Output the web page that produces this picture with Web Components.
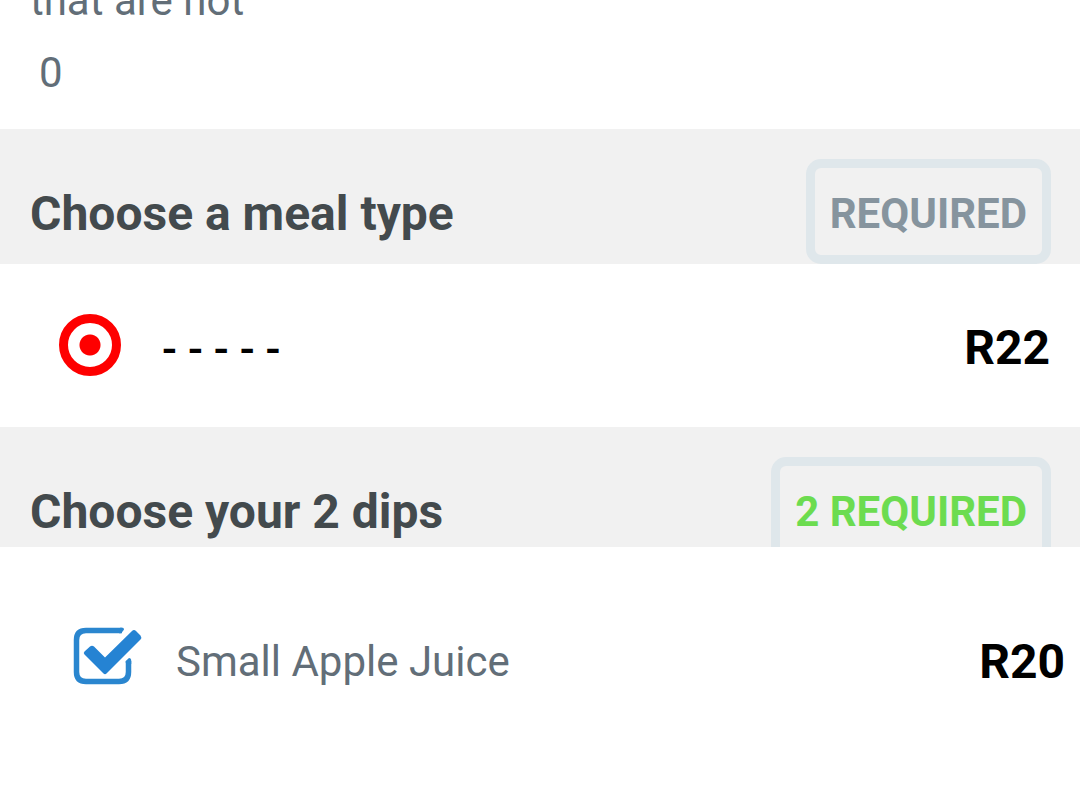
<!DOCTYPE html>
<html lang="en">
<head>
<meta charset="utf-8">
<meta name="viewport" content="width=device-width, initial-scale=1">
<title>Meal options</title>
<style>
  html, body { margin: 0; background: #fff; }
  body { font-family: Roboto, "Liberation Sans", sans-serif; font-size: 42px; line-height: 50px; color: #626e78; overflow: hidden; }
</style>
</head>
<body>
<meal-page>
  <meal-note slot="note">that are not<span slot="count">0</span></meal-note>
  <option-group heading="Choose a meal type" badge="REQUIRED">
    <meal-radio price="R22">- - - - -</meal-radio>
  </option-group>
  <option-group heading="Choose your 2 dips" badge="2 REQUIRED" clipped>
    <meal-check price="R20">Small Apple Juice</meal-check>
  </option-group>
</meal-page>

<script>
const attach = (el, html) => {
  const t = document.createElement('template');
  t.innerHTML = html;
  const root = el.attachShadow({ mode: 'open' });
  root.append(t.content.cloneNode(true));
  return root;
};

customElements.define('meal-page', class extends HTMLElement {
  constructor() {
    super();
    attach(this, `<style>:host { display: flex; flex-direction: column; }</style>
      <slot name="note"></slot><main><slot></slot></main>`);
  }
});

customElements.define('meal-note', class extends HTMLElement {
  constructor() {
    super();
    attach(this, `<style>
      :host { display: block; padding: 0 30px 31px; }
      p { margin: 0; }
      .text { margin-top: -24px; }
      .count { padding: 22px 9px 0; }
    </style>
    <p class="text"><slot></slot></p><p class="count"><slot name="count"></slot></p>`);
  }
});

customElements.define('option-group', class extends HTMLElement {
  constructor() {
    super();
    const root = attach(this, `<style>
      :host { display: block; }
      header { display: flex; justify-content: space-between; align-items: flex-start; padding: 30px 29px 0 30px; background: #f1f1f1; overflow: hidden; }
      :host([clipped]) header { height: 90px; }
      h2 { margin: 0; padding-top: 27px; font-size: 48px; line-height: 56px; font-weight: 700; color: #434a4d; }
      span { border: 9px solid #dfe7eb; border-radius: 15px; padding: 21px 15px 16px; font-weight: 700; color: #86949e; white-space: nowrap; }
      :host([clipped]) span { color: #6cdc50; }
    </style>
    <section><header><h2></h2><span></span></header><slot></slot></section>`);
    root.querySelector('h2').textContent = this.getAttribute('heading');
    root.querySelector('span').textContent = this.getAttribute('badge');
  }
});

customElements.define('meal-radio', class extends HTMLElement {
  constructor() {
    super();
    const root = attach(this, `<style>
      :host { display: block; }
      label { display: flex; align-items: center; padding: 50px 30px 51px 59px; color: #000; font-size: 48px; line-height: 62px; }
      input { appearance: none; box-sizing: border-box; flex: none; width: 62px; height: 62px; margin: 0 41px 0 0; border: 9px solid #fe0000; border-radius: 50%; background: radial-gradient(circle, #fe0000 10px, #fff 11px); }
      .name { flex: 1; font-size: 44px; font-weight: 500; }
      .name, b { padding-top: 4px; margin-bottom: -4px; }
      b { margin-top: -2px; }
    </style>
    <label><input type="radio" name="meal" checked><span class="name"><slot></slot></span><b></b></label>`);
    root.querySelector('b').textContent = this.getAttribute('price');
  }
});

customElements.define('meal-check', class extends HTMLElement {
  constructor() {
    super();
    const root = attach(this, `<style>
      :host { display: block; }
      label { display: flex; align-items: center; padding: 80px 15px 80px 73px; }
      .box { display: grid; flex: none; width: 70px; height: 60px; margin-right: 33px; }
      .box > * { grid-area: 1 / 1; }
      input { appearance: none; width: 58px; height: 58px; margin: 0; }
      svg { width: 70px; height: 60px; pointer-events: none; }
      .mark { opacity: 0; }
      input:checked + svg .mark { opacity: 1; }
      .name { flex: 1; padding-top: 10px; }
      b { padding-top: 10px; font-size: 48px; color: #000; }
    </style>
    <label><span class="box"><input type="checkbox" checked>
      <svg viewBox="0 0 70 60" aria-hidden="true">
        <path d="M49 3.500H13Q3.500 3.500 3.500 13V45Q3.500 54.500 13 54.500H46Q55.500 54.500 55.500 45V34" fill="none" stroke="#2a86cf" stroke-width="5.500"/>
        <path d="M47 .75H50Q52 2 50 4L48 6.250H46ZM52.750 36V34L56 31Q58.250 31 58.250 34V37Z" fill="#2a86cf"/>
        <path class="mark" d="M30.500 46.500L11.500 27.500Q10 26 11.500 24.500L17 19.500Q19 18 21 19.500L32 30.500L59 4Q61 2 63 4L67.500 8.500Q69 10.500 67.500 12.500L33.500 46.500Q32 48 30.500 46.500Z" fill="#2583d3"/>
      </svg></span><span class="name"><slot></slot></span><b></b></label>`);
    root.querySelector('b').textContent = this.getAttribute('price');
  }
});
</script>
</body>
</html>
